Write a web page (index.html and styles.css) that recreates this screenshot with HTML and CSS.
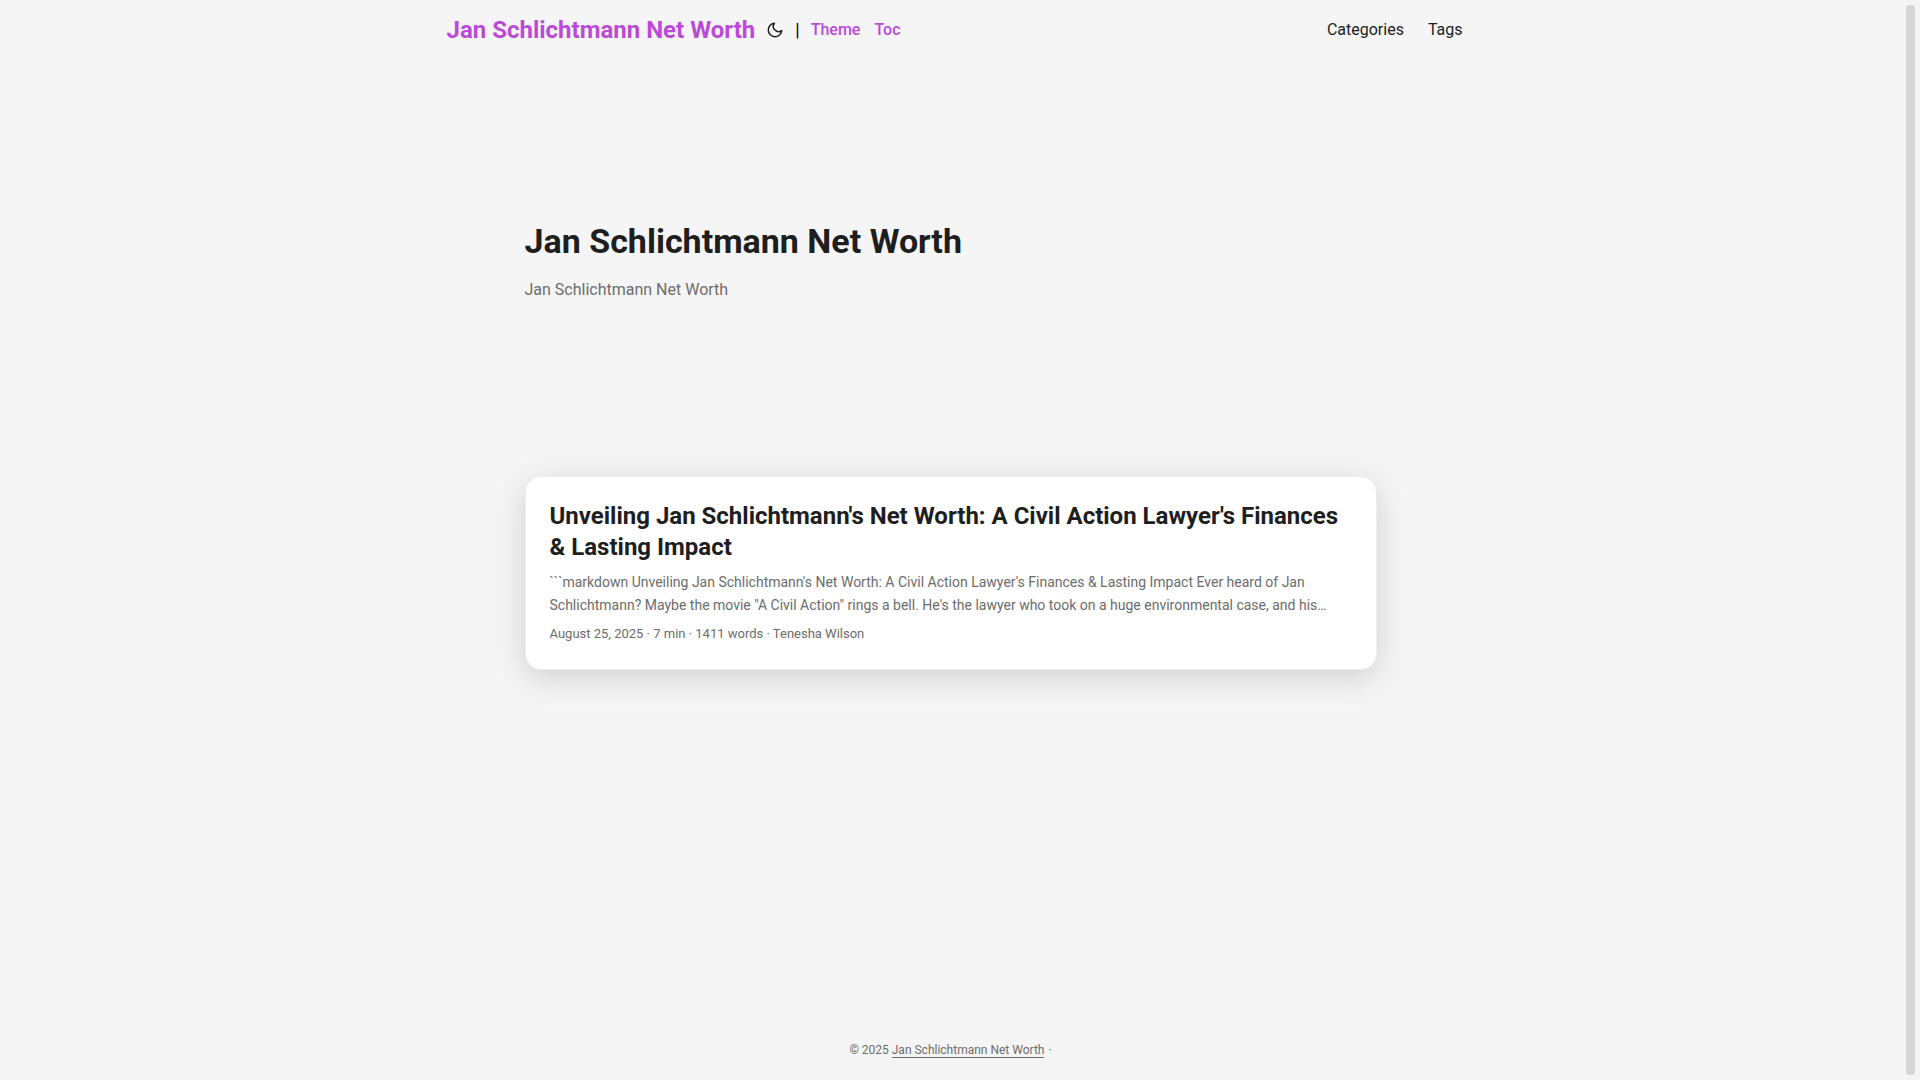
FILE: index.html
```html
<!DOCTYPE html>
<html lang="en">
<head>
    <meta charset="UTF-8">
    <meta name="viewport" content="width=device-width, initial-scale=1.0">
    <title>Jan Schlichtmann Net Worth</title>
    <link rel="stylesheet" href="styles.css">
</head>
<body>
    <div class="page">
        <header class="header">
            <nav class="nav">
                <div class="logo">
                    <a class="logo-title" href="#">Jan Schlichtmann Net Worth</a>
                    <button class="theme-toggle" aria-label="Toggle theme">
                        <svg width="18" height="18" viewBox="0 0 24 24" fill="none" stroke="currentColor" stroke-width="2" stroke-linecap="round" stroke-linejoin="round">
                            <path d="M21 12.79A9 9 0 1 1 11.21 3 7 7 0 0 0 21 12.79z"></path>
                        </svg>
                    </button>
                    <span class="divider">|</span>
                    <a class="logo-link" href="#">Theme</a>
                    <a class="logo-link" href="#">Toc</a>
                </div>
                <ul class="menu">
                    <li><a href="#">Categories</a></li>
                    <li><a href="#">Tags</a></li>
                </ul>
            </nav>
        </header>
        <main class="main">
            <section class="first-entry">
                <h1>Jan Schlichtmann Net Worth</h1>
                <p>Jan Schlichtmann Net Worth</p>
            </section>
            <article class="post-entry">
                <h2><a href="#">Unveiling Jan Schlichtmann's Net Worth: A Civil Action Lawyer's Finances &amp; Lasting Impact</a></h2>
                <p class="entry-content">```markdown Unveiling Jan Schlichtmann's Net Worth: A Civil Action Lawyer's Finances &amp; Lasting Impact Ever heard of Jan Schlichtmann? Maybe the movie "A Civil Action" rings a bell. He's the lawyer who took on a huge environmental case, and his…</p>
                <div class="entry-footer">August 25, 2025 · 7 min · 1411 words · Tenesha Wilson</div>
            </article>
        </main>
        <footer class="footer">
            <span>© 2025 <a href="#">Jan Schlichtmann Net Worth</a></span>
            <span>·</span>
        </footer>
    </div>
    <div class="scrollbar"><div class="thumb"></div></div>
</body>
</html>
```

FILE: styles.css
```css
* {
    box-sizing: border-box;
}

body {
    display: flex;
    min-height: 100vh;
    margin: 0;
    background: #f5f5f5;
    color: #1e1e1e;
    font-family: Roboto, "Liberation Sans", sans-serif;
    font-size: 16px;
    line-height: 26px;
}

a {
    color: inherit;
    text-decoration: none;
}

h1, h2, p, ul {
    margin: 0;
    padding: 0;
}

.page {
    display: flex;
    flex-direction: column;
    flex: 1;
}

/* header */
.nav {
    display: flex;
    justify-content: space-between;
    align-items: center;
    max-width: 1024px;
    height: 60px;
    margin: 0 auto;
    padding-left: 8px;
}

.logo {
    display: flex;
    align-items: center;
}

.logo-title {
    color: #bc4ad8;
    font-size: 24px;
    font-weight: 700;
}

.theme-toggle {
    display: flex;
    margin: 0 11px;
    padding: 0;
    border: 0;
    background: none;
    color: inherit;
    cursor: pointer;
}

.divider {
    margin-right: 11px;
    color: #000;
    font-size: 18px;
}

.logo-link {
    margin-right: 14px;
    color: #bc4ad8;
    font-weight: 500;
}

.menu {
    display: flex;
    gap: 24px;
    list-style: none;
}

/* content */
.main {
    flex: 1;
    width: 100%;
    max-width: 900px;
    margin: 0 auto;
    padding: 24px;
}

.first-entry {
    display: flex;
    flex-direction: column;
    justify-content: center;
    gap: 14px;
    min-height: 354px;
    margin-bottom: 38px;
}

.first-entry h1 {
    font-size: 34px;
    line-height: 44px;
}

.first-entry p {
    color: #6c6c6c;
}

.post-entry {
    padding: 24px;
    border: 1px solid #eee;
    border-radius: 16px;
    background: #fff;
    box-shadow: 0 8px 32px rgba(0, 0, 0, 0.15);
}

.post-entry h2 {
    font-size: 24px;
    line-height: 31px;
}

.entry-content {
    margin: 8px 0 6px;
    color: #6c6c6c;
    font-size: 14px;
    line-height: 23px;
}

.entry-footer {
    color: #6c6c6c;
    font-size: 13px;
    line-height: 22px;
}

/* footer */
.footer {
    display: flex;
    justify-content: center;
    align-items: center;
    gap: 4px;
    height: 60px;
    color: #6c6c6c;
    font-size: 12px;
    line-height: 16px;
}

.footer a {
    border-bottom: 1px solid #6c6c6c;
}

/* scrollbar */
.scrollbar {
    display: flex;
    width: 19px;
    padding: 5px;
}

.thumb {
    flex: 1;
    border-radius: 3px;
    background: #d6d6d6;
}
```
